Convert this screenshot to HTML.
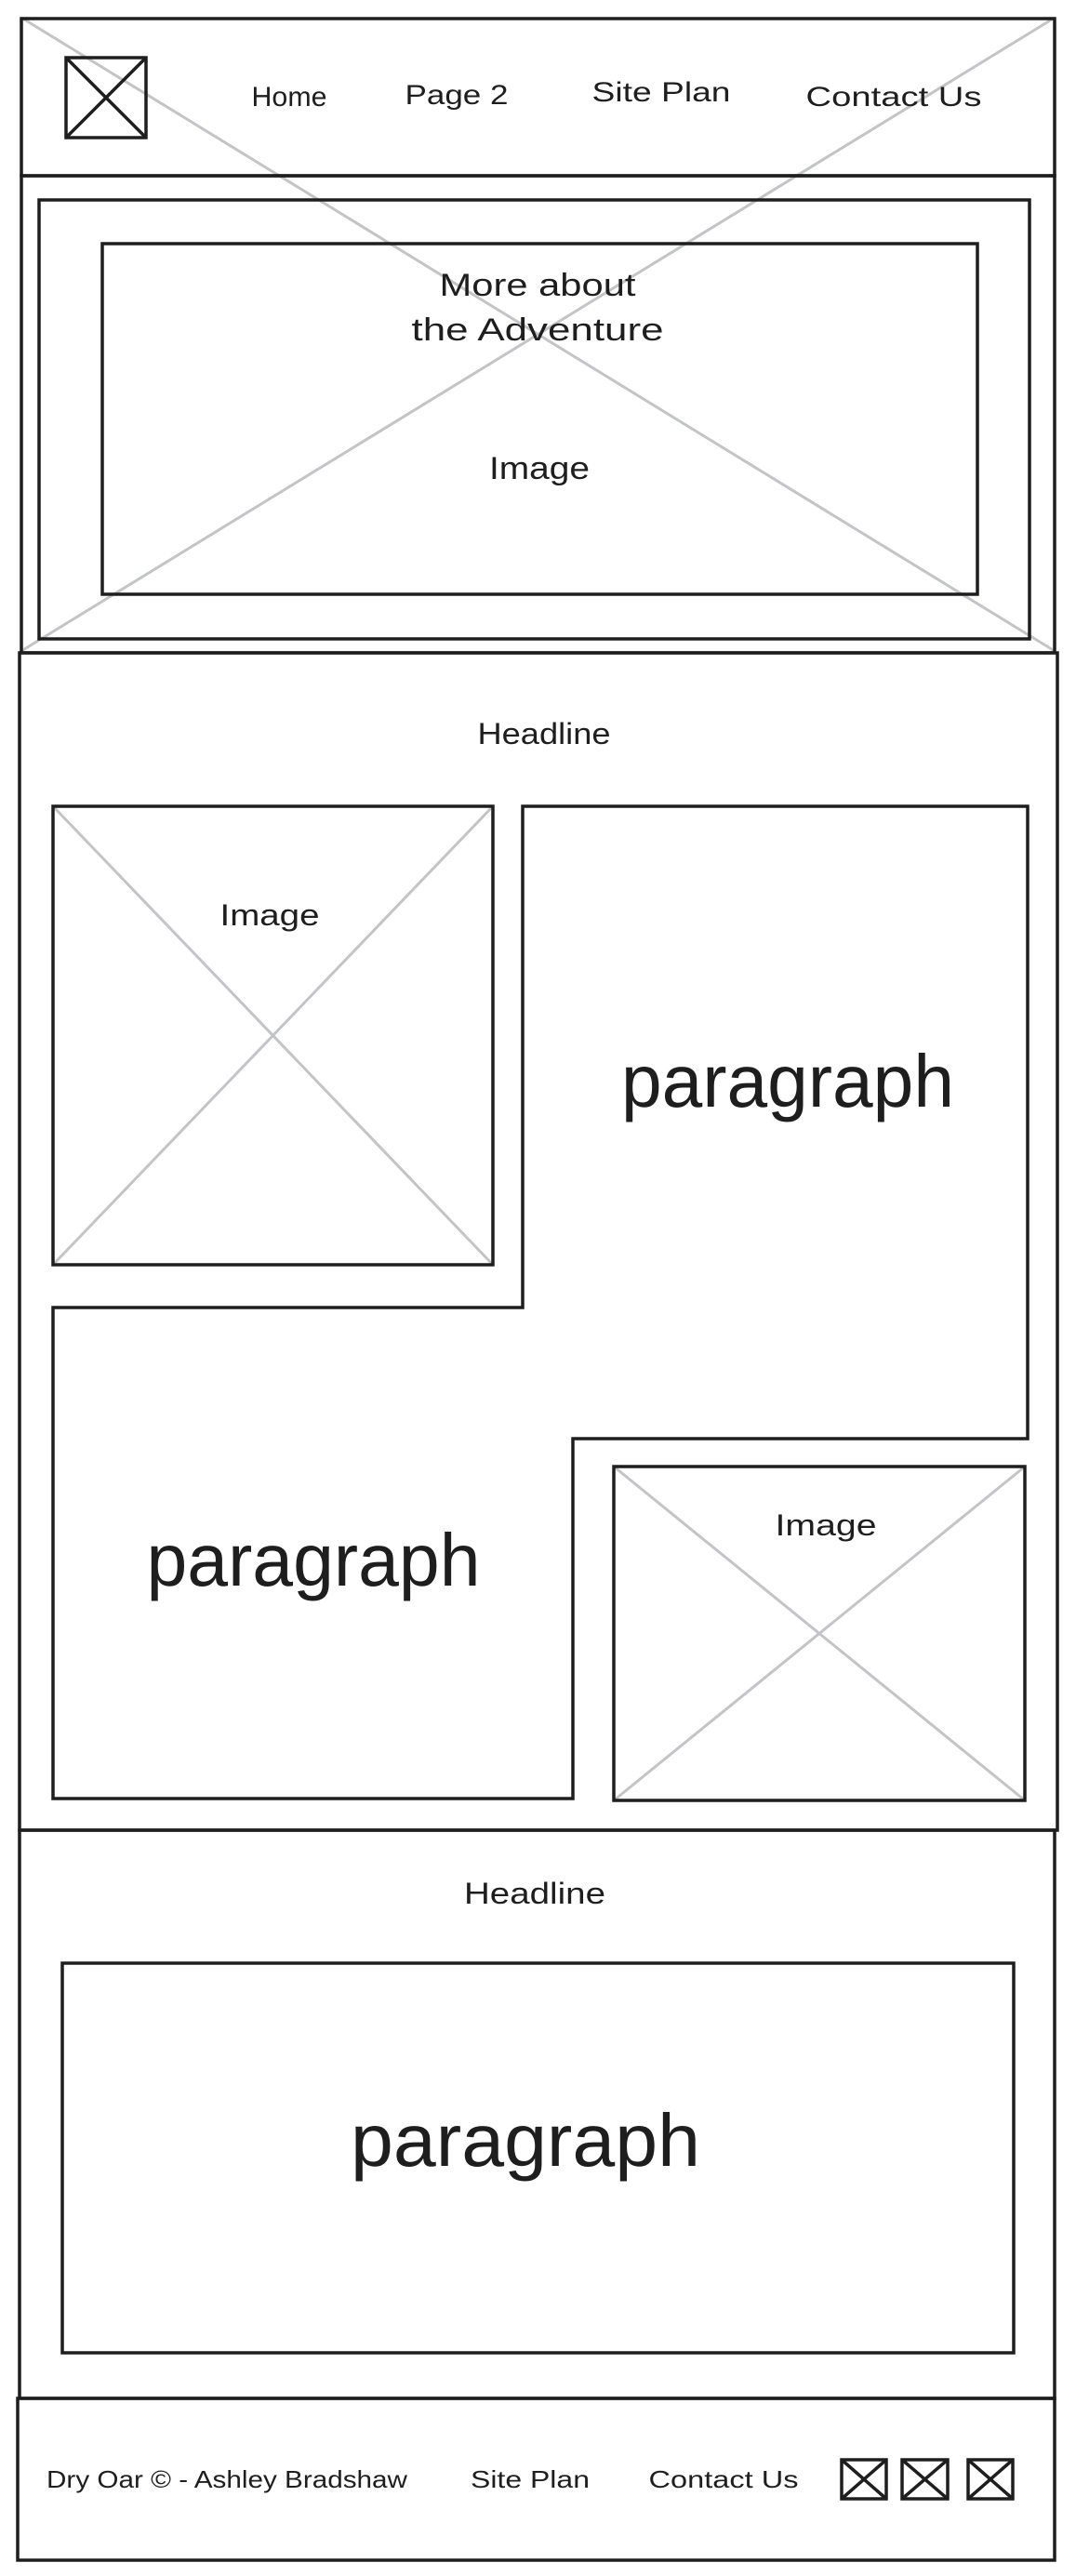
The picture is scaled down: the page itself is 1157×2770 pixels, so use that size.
<!DOCTYPE html>
<html><head><meta charset="utf-8"><style>html,body{margin:0;padding:0;background:#fff;}svg{display:block}</style></head>
<body>
<svg width="1157" height="2770" viewBox="0 0 1157 2770" xmlns="http://www.w3.org/2000/svg" font-family="'Liberation Sans', sans-serif" fill="#1e1e1e">
<g stroke="#c3c4c8" stroke-width="3" fill="none">
<line x1="23" y1="19" x2="1134" y2="700"/>
<line x1="1134" y1="19" x2="23" y2="700"/>
<line x1="57" y1="867" x2="530" y2="1360"/>
<line x1="530" y1="867" x2="57" y2="1360"/>
<line x1="660" y1="1577" x2="1102" y2="1936"/>
<line x1="1102" y1="1577" x2="660" y2="1936"/>
</g>
<g stroke="#1e1e1e" stroke-width="3.5" fill="none">
<rect x="23" y="20" width="1111" height="169"/>
<rect x="71" y="62" width="86" height="86"/>
<line x1="71" y1="62" x2="157" y2="148"/><line x1="157" y1="62" x2="71" y2="148"/>
<rect x="23" y="189" width="1111" height="513"/>
<rect x="42" y="215" width="1065" height="472"/>
<rect x="110" y="262" width="941" height="377"/>
<rect x="21" y="702" width="1116" height="1266"/>
<rect x="57" y="867" width="473" height="493"/>
<polygon points="562,867 1105,867 1105,1547 616,1547 616,1934 57,1934 57,1406 562,1406"/>
<rect x="660" y="1577" width="442" height="359"/>
<rect x="21" y="1968" width="1113" height="611"/>
<rect x="67" y="2111" width="1023" height="419"/>
<rect x="19" y="2579" width="1115" height="174"/>
<rect x="905" y="2645" width="48" height="42"/>
<line x1="905" y1="2645" x2="953" y2="2687"/><line x1="953" y1="2645" x2="905" y2="2687"/>
<rect x="970" y="2645" width="49" height="42"/>
<line x1="970" y1="2645" x2="1019" y2="2687"/><line x1="1019" y1="2645" x2="970" y2="2687"/>
<rect x="1041" y="2645" width="48" height="42"/>
<line x1="1041" y1="2645" x2="1089" y2="2687"/><line x1="1089" y1="2645" x2="1041" y2="2687"/>
</g>
<g font-size="30" text-anchor="middle">
<text x="311" y="114" textLength="81" lengthAdjust="spacingAndGlyphs">Home</text>
<text x="491" y="112" textLength="111" lengthAdjust="spacingAndGlyphs">Page 2</text>
<text x="711" y="109" textLength="149" lengthAdjust="spacingAndGlyphs">Site Plan</text>
<text x="961" y="114" textLength="189" lengthAdjust="spacingAndGlyphs">Contact Us</text>
</g>
<g font-size="34" text-anchor="middle">
<text x="578" y="318" textLength="211" lengthAdjust="spacingAndGlyphs">More about</text>
<text x="578" y="366" textLength="271" lengthAdjust="spacingAndGlyphs">the Adventure</text>
<text x="580" y="515" textLength="108" lengthAdjust="spacingAndGlyphs">Image</text>
</g>
<g font-size="32" text-anchor="middle">
<text x="585" y="800" textLength="143" lengthAdjust="spacingAndGlyphs">Headline</text>
<text x="290" y="995" textLength="107" lengthAdjust="spacingAndGlyphs">Image</text>
<text x="888" y="1651" textLength="109" lengthAdjust="spacingAndGlyphs">Image</text>
<text x="575" y="2047" textLength="152" lengthAdjust="spacingAndGlyphs">Headline</text>
</g>
<g font-size="80" text-anchor="middle">
<text x="847" y="1190" textLength="358" lengthAdjust="spacingAndGlyphs">paragraph</text>
<text x="337" y="1705" textLength="359" lengthAdjust="spacingAndGlyphs">paragraph</text>
<text x="565" y="2329" textLength="376" lengthAdjust="spacingAndGlyphs">paragraph</text>
</g>
<g font-size="26" text-anchor="middle">
<text x="244" y="2675" textLength="388" lengthAdjust="spacingAndGlyphs">Dry Oar © - Ashley Bradshaw</text>
<text x="570" y="2675" textLength="128" lengthAdjust="spacingAndGlyphs">Site Plan</text>
<text x="778" y="2675" textLength="161" lengthAdjust="spacingAndGlyphs">Contact Us</text>
</g>
</svg>
</body></html>
